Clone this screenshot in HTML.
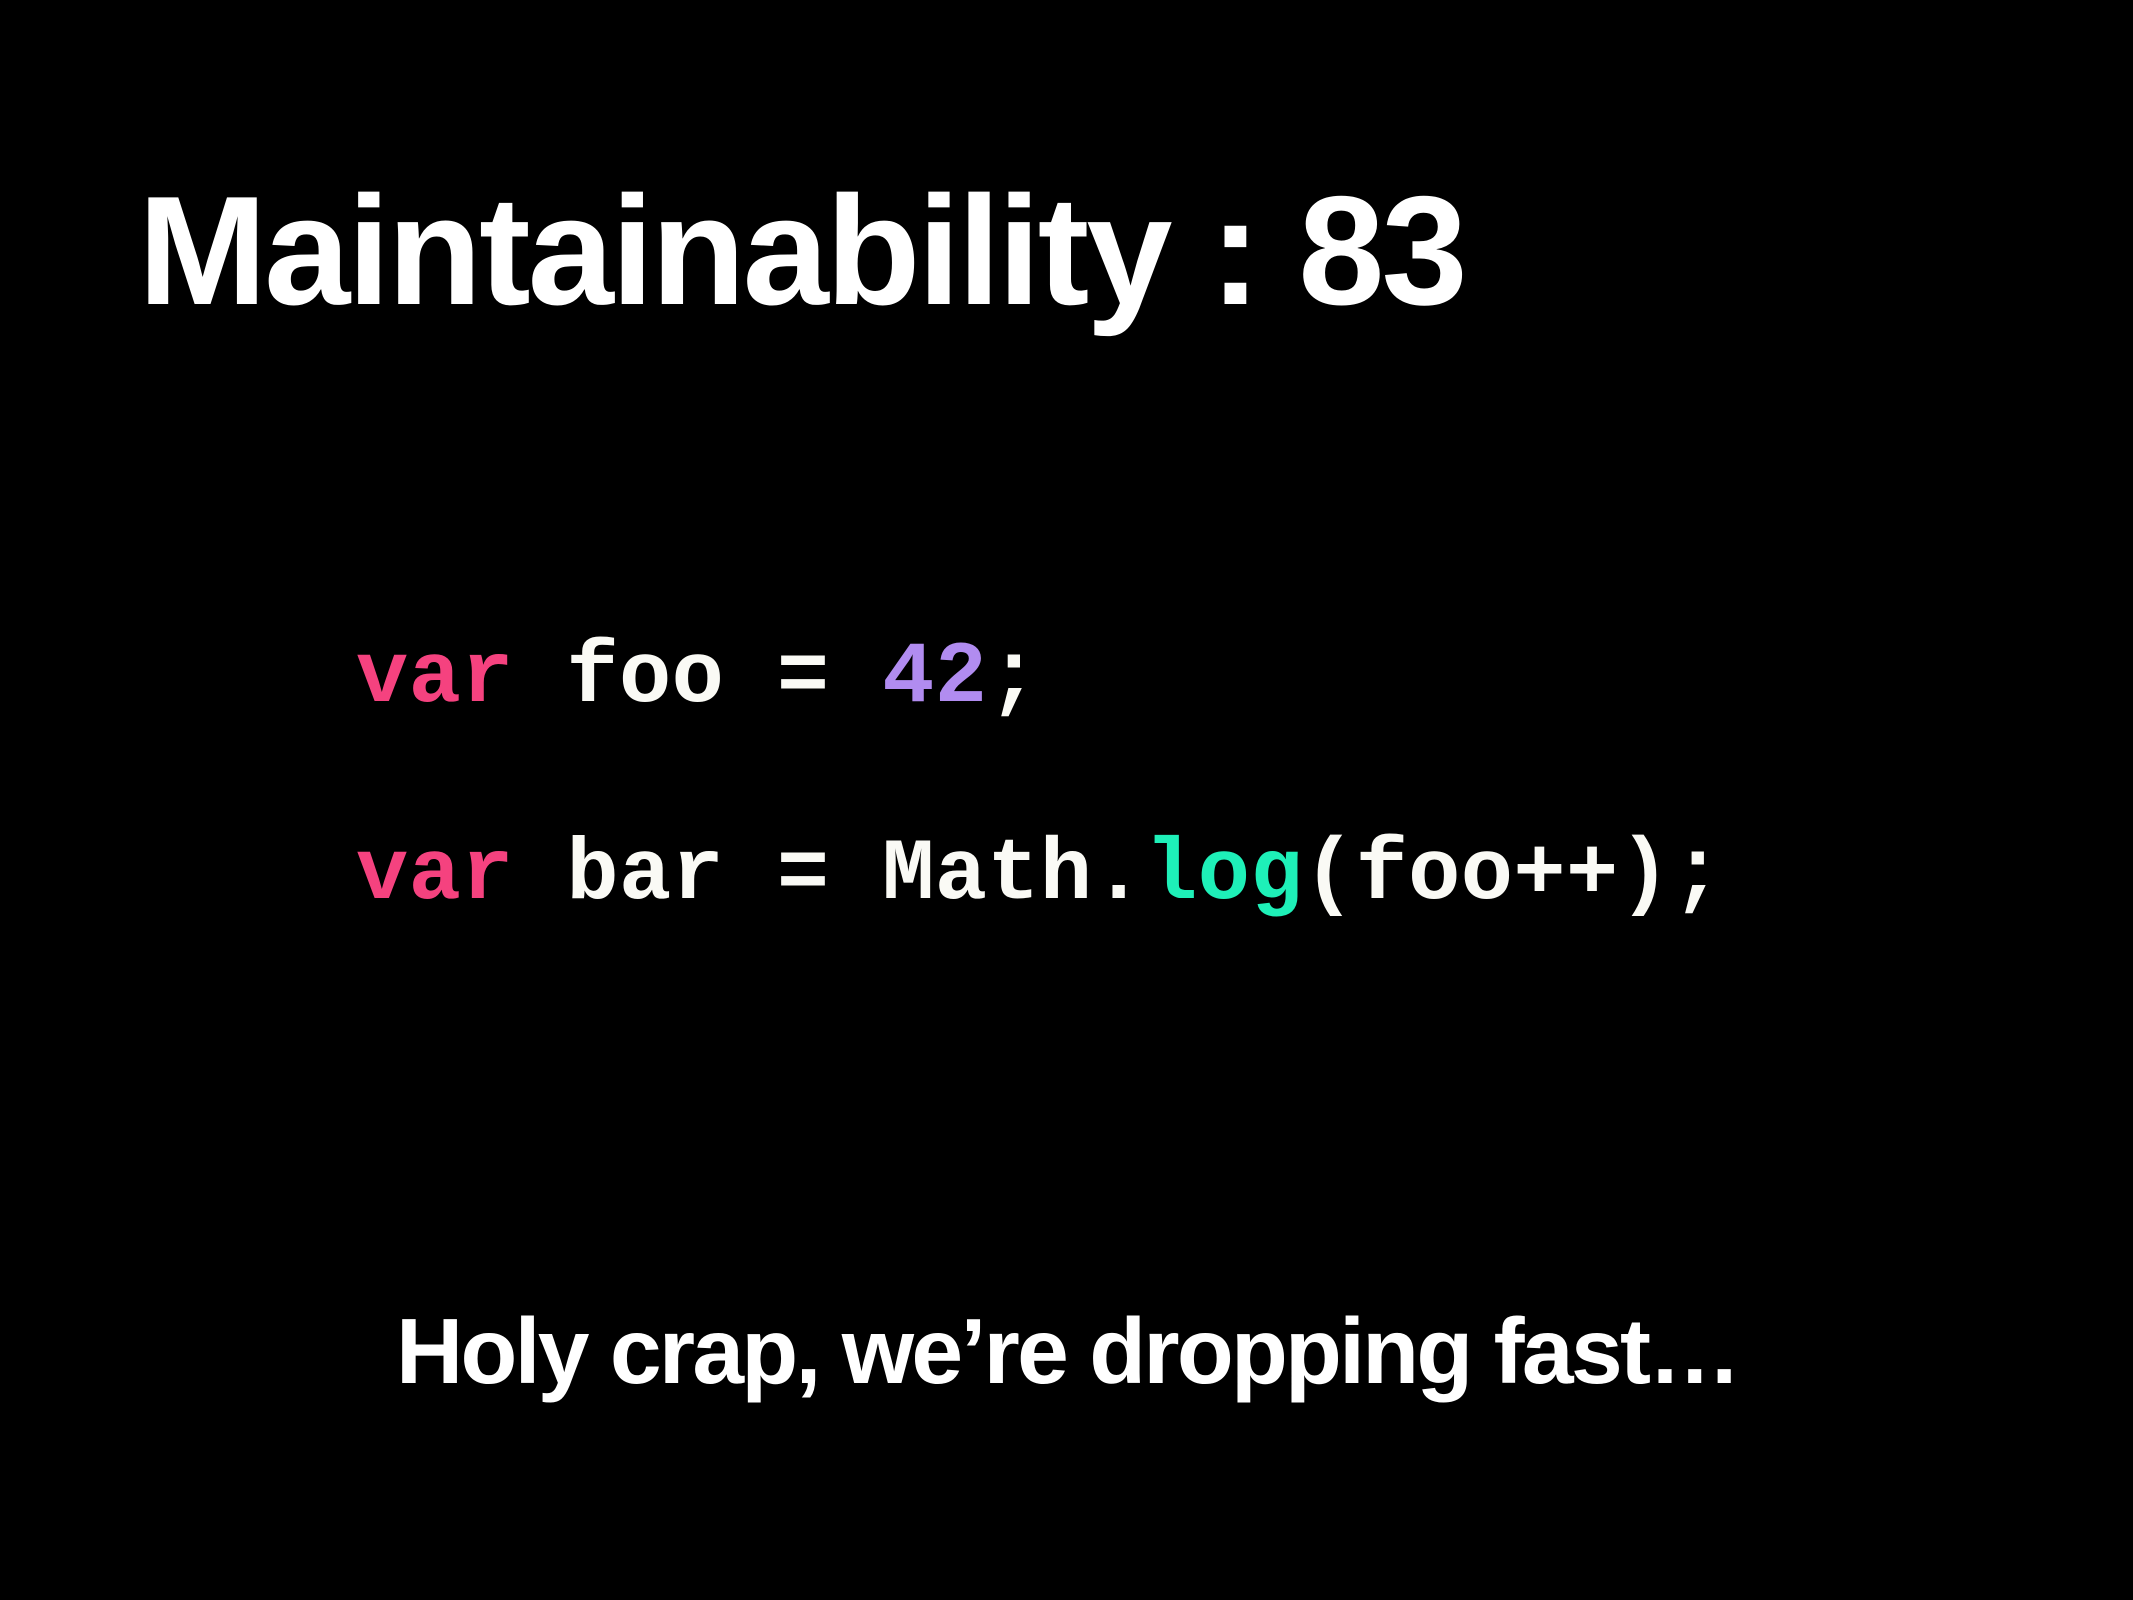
<!DOCTYPE html>
<html><head><style>
html,body{margin:0;padding:0;background:#000;width:2133px;height:1600px;overflow:hidden}
.t{position:absolute;left:138px;top:0;font:bold 155px/1 "Liberation Sans",sans-serif;color:#fff;letter-spacing:-3px;white-space:nowrap}
.c{position:absolute;left:356px;font:bold 87px/1 "Liberation Mono",monospace;color:#fafaf5;white-space:pre;letter-spacing:0.4px}
.k{color:#f5427f}.n{color:#b18cf0}.g{color:#1ef0b8}
.s{position:absolute;left:396px;font:bold 93px/1 "Liberation Sans",sans-serif;color:#fff;letter-spacing:-2.7px;white-space:nowrap}
</style></head><body>
<div class="t" style="top:173px">Maintainability : 83</div>
<div class="c" style="top:636px"><span class="k">var</span> foo = <span class="n">42</span>;</div>
<div class="c" style="top:833px"><span class="k">var</span> bar = Math.<span class="g">log</span>(foo++);</div>
<div class="s" style="top:1305px">Holy crap, we’re dropping fast…</div>
</body></html>
